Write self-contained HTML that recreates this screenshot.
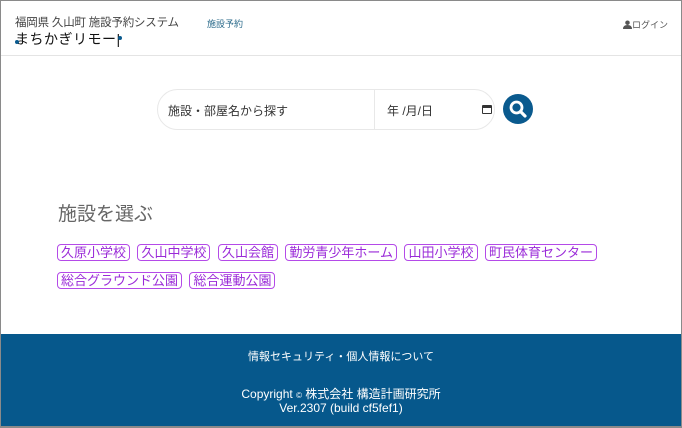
<!DOCTYPE html>
<html><head><meta charset="utf-8"><style>
*{margin:0;padding:0;box-sizing:border-box}
body{width:682px;height:428px;overflow:hidden;background:#fff;font-family:"Liberation Sans","Noto Sans CJK JP",sans-serif;position:relative}
.frame{position:absolute;inset:0;border:1px solid #8a8a8a;border-bottom-width:2px;pointer-events:none;z-index:5}
.hdr{position:absolute;left:0;top:0;width:682px;height:56px;border-bottom:1px solid #e4e4e4}
.t1{position:absolute;left:15px;top:14px;font-size:11.5px;color:#444;letter-spacing:-0.2px}
.t2{position:absolute;left:15px;top:29px;font-size:14px;color:#111;letter-spacing:0.5px}
.d{position:absolute;width:4px;height:4px;border-radius:50%;background:#0a5a8e}
.nav{position:absolute;left:207px;top:17px;font-size:9px;color:#2a6a8a}
.login{position:absolute;right:14px;top:18px;font-size:9px;color:#555}
.search{position:absolute;left:157px;top:89px;width:338px;height:41px;border:1px solid #e8e8e8;border-radius:21px}
.search .a{position:absolute;left:10px;top:12px;font-size:12px;color:#333}
.search .sep{position:absolute;left:216px;top:0;width:1px;height:39px;background:#e8e8e8}
.search .b{position:absolute;left:229px;top:12px;font-size:12px;color:#333}
.cal{position:absolute;left:324px;top:15px;width:10px;height:9px;border:1.5px solid #333;border-top-width:3px;border-radius:1px}
.btn{position:absolute;left:503px;top:94px;width:30px;height:30px;border-radius:50%;background:#0a5a8e}
h2{position:absolute;left:58px;top:199px;font-size:19px;font-weight:normal;color:#666}
.tags{position:absolute;left:57px;top:244px;width:600px}
.tag{display:inline-block;font-size:13px;line-height:15px;color:#9a2ad8;border:1.5px solid #b44ae8;border-radius:4px;padding:0 3px;margin:0 3px 11px 0}
.foot{position:absolute;left:0;top:334px;width:682px;height:94px;background:#06588c;color:#fff;text-align:center;font-size:11px}
</style></head><body>
<div class="frame"></div>
<div class="hdr">
<div class="t1">福岡県 久山町 施設予約システム</div>
<div class="t2">まちかぎリモー|</div>
<div class="d" style="left:15px;top:40px"></div>
<div class="d" style="left:118px;top:36px"></div>
<div class="nav">施設予約</div>
<div class="login"><svg width="9" height="9" viewBox="0 0 10 10" style="vertical-align:-1px"><circle cx="5" cy="3" r="2.5" fill="#555"/><path d="M0 10 Q0 5.5 5 5.5 Q10 5.5 10 10Z" fill="#555"/></svg>ログイン</div>
</div>
<div class="search"><div class="a">施設・部屋名から探す</div><div class="sep"></div><div class="b">年 /月/日</div><div class="cal"></div></div>
<div class="btn"><svg width="30" height="30" viewBox="0 0 30 30"><circle cx="13.5" cy="13.5" r="5.5" fill="none" stroke="#fff" stroke-width="2.8"/><path d="M17.5 17.5 L22 22" stroke="#fff" stroke-width="3.2" stroke-linecap="round"/></svg></div>
<h2>施設を選ぶ</h2>
<div class="tags">
<span class="tag">久原小学校</span> <span class="tag">久山中学校</span> <span class="tag">久山会館</span> <span class="tag">勤労青少年ホーム</span> <span class="tag">山田小学校</span> <span class="tag">町民体育センター</span><br>
<span class="tag">総合グラウンド公園</span> <span class="tag">総合運動公園</span>
</div>
<div class="foot">
<div style="position:absolute;top:14px;width:100%">情報セキュリティ・個人情報について</div>
<div style="position:absolute;top:51px;width:100%;font-size:12px">Copyright <span style="font-size:8px">©</span> 株式会社 構造計画研究所</div>
<div style="position:absolute;top:67px;width:100%;font-size:12px">Ver.2307 (build cf5fef1)</div>
</div>
</body></html>
